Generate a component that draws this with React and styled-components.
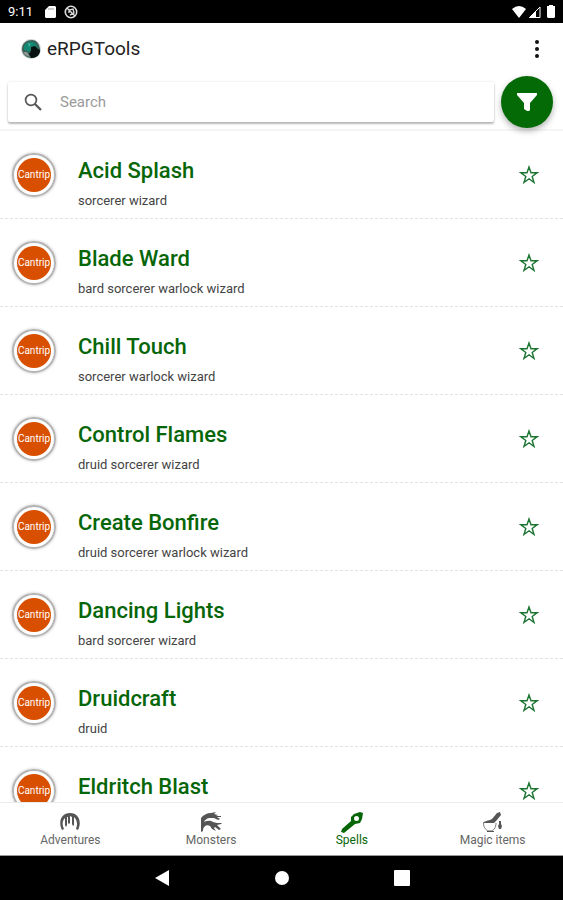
import styled, { createGlobalStyle } from "styled-components";

const GlobalStyle = createGlobalStyle`
  * {
    box-sizing: border-box;
  }
  body {
    margin: 0;
    background: #fff;
    font-family: Roboto, "Noto Sans", sans-serif;
    color: #222;
  }
  button {
    border: 0;
    padding: 0;
    background: none;
    font: inherit;
    cursor: pointer;
  }
  svg {
    display: block;
  }
`;

const Wrap = styled.div`
  height: 100vh;
  display: flex;
  flex-direction: column;
`;

const StatusBar = styled.div`
  flex: none;
  height: 23px;
  padding: 0 7px 0 8px;
  background: #000;
  color: #fff;
  display: flex;
  align-items: center;
  justify-content: space-between;
  font-size: 13px;
`;
const StatusGroup = styled.div`
  display: flex;
  align-items: center;
  gap: ${({ $gap }) => $gap}px;
`;

const AppBar = styled.header`
  flex: none;
  height: 52px;
  padding: 0 16px 0 20px;
  display: flex;
  align-items: center;
  gap: 5px;
`;
const AppTitle = styled.h1`
  flex: 1;
  margin: 0;
  font-size: 19px;
  font-weight: 400;
  line-height: 24px;
`;
const MenuButton = styled.button`
  width: 20px;
  height: 24px;
  display: flex;
  align-items: center;
  justify-content: center;
`;

const SearchRow = styled.div`
  flex: none;
  height: 56px;
  padding: 0 10px 0 8px;
  border-bottom: 2px solid #f5f5f5;
  display: flex;
  align-items: center;
  gap: 7px;
`;
const SearchBox = styled.label`
  flex: 1;
  height: 40px;
  padding: 0 16px;
  display: flex;
  align-items: center;
  gap: 18px;
  border-radius: 2px;
  background: #fff;
  box-shadow: 0 2px 2px rgba(0, 0, 0, 0.26), 0 0 3px rgba(0, 0, 0, 0.1);
`;
const SearchInput = styled.input`
  flex: 1;
  min-width: 0;
  border: 0;
  outline: 0;
  padding: 0;
  background: none;
  font: 15px/20px Roboto, "Noto Sans", sans-serif;
  &::placeholder {
    color: #9a9a9a;
    opacity: 1;
  }
`;
const FilterButton = styled.button`
  position: relative;
  width: 52px;
  height: 52px;
  border-radius: 50%;
  background: #036a05;
  box-shadow: 0 3px 6px rgba(0, 0, 0, 0.3);
  display: flex;
  align-items: center;
  justify-content: center;
`;

const List = styled.ul`
  flex: 1;
  min-height: 0;
  margin: 0;
  padding: 0;
  list-style: none;
  overflow-y: auto;
  scrollbar-width: none;
`;
const Row = styled.li`
  height: 88px;
  padding: 0 22px 0 12px;
  border-bottom: 1px dashed #e2e2e2;
  display: flex;
  align-items: center;
`;
const Level = styled.div`
  flex: none;
  width: 44px;
  height: 44px;
  border: 2px solid #b4b4b4;
  border-radius: 50%;
  padding: 3px;
  box-shadow: 0 0 3px rgba(0, 0, 0, 0.3);
`;
const LevelText = styled.div`
  height: 100%;
  border-radius: 50%;
  background: #d94f00;
  color: #fff;
  font-size: 10px;
  display: flex;
  align-items: center;
  justify-content: center;
`;
const Info = styled.div`
  flex: 1;
  min-width: 0;
  align-self: flex-start;
  padding: 26px 0 0 22px;
`;
const Name = styled.h2`
  margin: 0;
  font-size: 22px;
  font-weight: 500;
  line-height: 28px;
  color: #066608;
`;
const Classes = styled.p`
  margin: 7px 0 0;
  font-size: 13px;
  line-height: 18px;
  color: #444;
`;
const StarButton = styled.button`
  width: 24px;
  height: 24px;
  display: flex;
  align-items: center;
  justify-content: center;
`;

const Tabs = styled.nav`
  flex: none;
  height: 54px;
  border-top: 1px solid #ececec;
  border-bottom: 1px solid #999;
  display: flex;
`;
const Tab = styled.a`
  flex: 1;
  padding-top: 8px;
  display: flex;
  flex-direction: column;
  align-items: center;
  color: ${({ $active }) => ($active ? "#066608" : "#666")};
  font-size: 12px;
  line-height: 14px;
  text-decoration: none;
`;

const SystemBar = styled.div`
  flex: none;
  height: 44px;
  background: #000;
  display: flex;
  align-items: center;
  justify-content: center;
  gap: 96px;
`;
const SystemButton = styled.button`
  width: 24px;
  height: 24px;
  display: flex;
  align-items: center;
  justify-content: center;
`;

const spells = [
  { name: "Acid Splash", classes: "sorcerer wizard" },
  { name: "Blade Ward", classes: "bard sorcerer warlock wizard" },
  { name: "Chill Touch", classes: "sorcerer warlock wizard" },
  { name: "Control Flames", classes: "druid sorcerer wizard" },
  { name: "Create Bonfire", classes: "druid sorcerer warlock wizard" },
  { name: "Dancing Lights", classes: "bard sorcerer wizard" },
  { name: "Druidcraft", classes: "druid" },
  { name: "Eldritch Blast" },
];

// arch with stalactites
const CaveIcon = () => (
  <svg width="22" height="22" viewBox="0 0 22 22" fill="#555">
    <path d="M3 19C-1 11 2 2 11 2s12 9 8 17l-2-1c2-5 1-9-2-12l0 8-1 1-1-2V6l-2-1v7l-1 1-1-1V6L8 6v8l-1 2-1-2V7c-3 3-3 7-1 11z" />
  </svg>
);
const HydraIcon = () => (
  <svg width="22" height="22" viewBox="0 0 22 22" fill="#555">
    <path d="M1 21V7C3 4 7 2 11 2l5-1-2 2 4 1-2 1 5 0 0 1-4 0 3 2-2 1-4-2-4 0C7 7 5 9 4 11c3-1 6-2 9 0l4 1 5 0-1 1-4 1 4 4-2 1-4-3-1 1 2 3-4-2-2-3C6 13 3 16 3 20z" />
  </svg>
);
const WandIcon = () => (
  <svg width="22" height="22" viewBox="0 0 22 22" fill="currentColor">
    <path
      fillRule="evenodd"
      d="M10 6l3-3 6-2 3 1-1 6-2 4-5 1L3 22l-3-1 1-3 9-8zM15.500 5a2.500 2.500 0 1 0 0 5 2.500 2.500 0 0 0 0-5z"
    />
  </svg>
);
const MortarIcon = () => (
  <svg width="22" height="22" viewBox="0 0 22 22" fill="#555">
    <path d="M15 2l3-1 1 3-5 6-2 2H1c1-2 5-2 9-4z" />
    <path
      d="M1.500 12c0 5 3 8 6.500 8s6-3 6-8"
      fill="none"
      stroke="#777"
      strokeWidth="1"
    />
    <path d="M5 20h7v1H5zM17 10h2v3l1 2-1 3-2 0-1-3 1-2z" />
  </svg>
);

const tabs = [
  { label: "Adventures", icon: <CaveIcon /> },
  { label: "Monsters", icon: <HydraIcon /> },
  { label: "Spells", icon: <WandIcon />, active: true },
  { label: "Magic items", icon: <MortarIcon /> },
];

const App = () => {
  return (
    <Wrap>
      <GlobalStyle />
      <StatusBar>
        <StatusGroup $gap={12}>
          <span>9:11</span>
          <StatusGroup $gap={8}>
            <svg width="11" height="12" viewBox="0 0 11 12" fill="#fff">
              <path d="M4 0h6l1 1v10l-1 1H1l-1-1V4z" />
              <path d="M4 2v2M6 2v2M8 2v2" stroke="#999" />
            </svg>
            <svg width="14" height="14" viewBox="0 0 14 14" fill="none" stroke="#ddd">
              <circle cx="7" cy="7" r="5.7" strokeWidth="1.6" />
              <path d="M3 3l8 8M5 8V5l4-1 1 4-4 2" strokeWidth="1.4" />
            </svg>
          </StatusGroup>
        </StatusGroup>
        <StatusGroup $gap={2}>
          <svg width="14" height="12" viewBox="0 0 14 12" fill="#fff">
            <path d="M0 3Q7-3 14 3L7 12z" />
          </svg>
          <svg width="13" height="12" viewBox="0 0 13 12">
            <path d="M1.5 11.5L12 1v10.500z" fill="none" stroke="#fff" />
            <path d="M1 12l7-7v7z" fill="#fff" />
          </svg>
          <svg width="13" height="13" viewBox="0 0 13 13" fill="#fff">
            <path d="M6 0h4v1h2v11l-1 1H5l-1-1V1h2z" />
          </svg>
        </StatusGroup>
      </StatusBar>

      <AppBar>
        <svg width="22" height="22" viewBox="0 0 22 22">
          <circle cx="11" cy="11" r="10" fill="#c9d3d1" />
          <path d="M2 11C2 5 7 2 12 2s7 4 8 9-3 9-8 9-10-3-10-9z" fill="#3c5f58" />
          <path d="M4 8c2-4 8-6 12-2l2 5-5-1-4 4-5-2z" fill="#128873" />
          <path d="M11 9l4-1 3 3 2 1c0 5-4 8-9 8l-2-4 2-3z" fill="#071211" />
          <path d="M3 14l4 0 3 5-5-2z" fill="#8b9793" />
          <path d="M8 5l3 1-2 3z" fill="#45b39f" />
        </svg>
        <AppTitle>eRPGTools</AppTitle>
        <MenuButton aria-label="Menu">
          <svg width="4" height="18" viewBox="0 0 4 18" fill="#111">
            <circle cx="2" cy="2" r="2" />
            <circle cx="2" cy="9" r="2" />
            <circle cx="2" cy="16" r="2" />
          </svg>
        </MenuButton>
      </AppBar>

      <SearchRow>
        <SearchBox>
          <svg width="18" height="18" viewBox="0 0 18 18" fill="none" stroke="#555">
            <circle cx="7" cy="7" r="5.4" strokeWidth="1.7" />
            <path d="M11 11l6 6" strokeWidth="2.200" />
          </svg>
          <SearchInput type="text" placeholder="Search" aria-label="Search" />
        </SearchBox>
        <FilterButton aria-label="Filter">
          <svg width="22" height="20" viewBox="0 0 22 20" fill="#fff">
            <path d="M1 1h20v2l-7 8v7l-1 1h-2l-3-2v-6L1 3z" />
          </svg>
        </FilterButton>
      </SearchRow>

      <List>
        {spells.map((spell) => (
          <Row key={spell.name}>
            <Level>
              <LevelText>Cantrip</LevelText>
            </Level>
            <Info>
              <Name>{spell.name}</Name>
              {spell.classes && <Classes>{spell.classes}</Classes>}
            </Info>
            <StarButton aria-label={`Favorite ${spell.name}`}>
              <svg width="20" height="20" viewBox="0 0 20 20" fill="none" stroke="#1b7430">
                <path
                  d="M10 2l2 5.800h6l-4.800 3.600 1.800 6.100-5-3.700-5 3.700 1.800-6.100L2 7.800h6z"
                  strokeWidth="1.400"
                />
              </svg>
            </StarButton>
          </Row>
        ))}
      </List>

      <Tabs>
        {tabs.map((tab) => (
          <Tab key={tab.label} href="#" $active={tab.active}>
            {tab.icon}
            {tab.label}
          </Tab>
        ))}
      </Tabs>

      <SystemBar>
        <SystemButton aria-label="Back">
          <svg width="14" height="16" viewBox="0 0 14 16" fill="#fff">
            <path d="M14 0v16L0 8z" />
          </svg>
        </SystemButton>
        <SystemButton aria-label="Home">
          <svg width="14" height="14" viewBox="0 0 14 14" fill="#fff">
            <circle cx="7" cy="7" r="7" />
          </svg>
        </SystemButton>
        <SystemButton aria-label="Recent apps">
          <svg width="16" height="16" viewBox="0 0 16 16" fill="#fff">
            <rect width="16" height="16" rx="1" />
          </svg>
        </SystemButton>
      </SystemBar>
    </Wrap>
  );
};

export default App;
